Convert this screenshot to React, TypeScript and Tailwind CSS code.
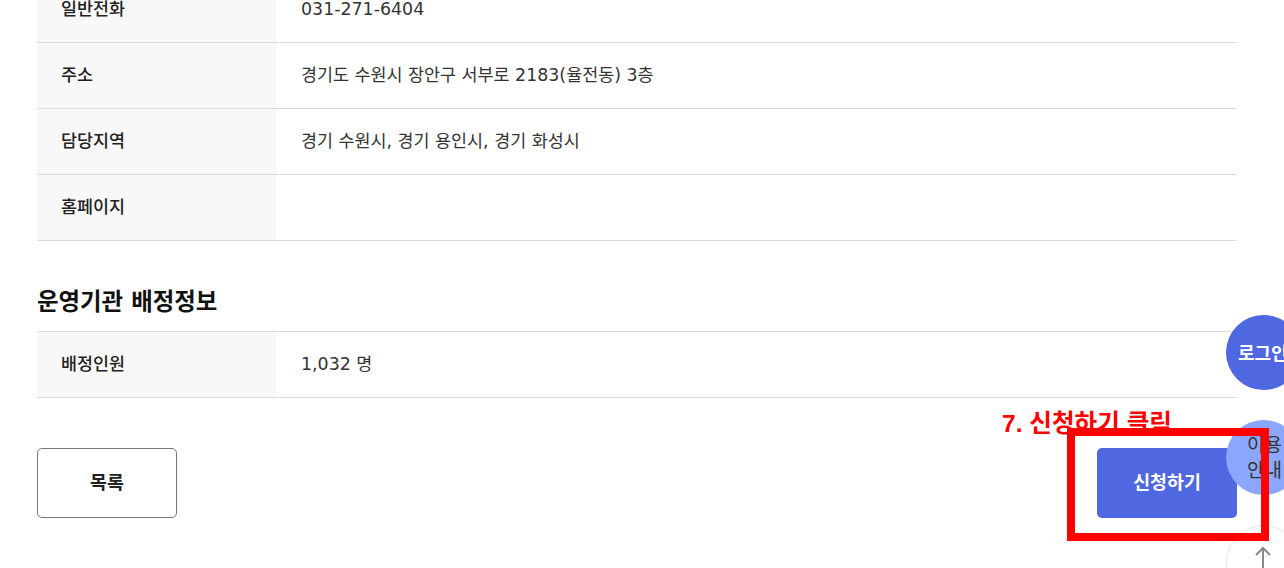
const rowLabel = "flex items-center w-[240px] h-[65px] pl-6 bg-[#f8f8f8] text-[17.4px] font-medium text-[#222]";
const rowValue = "flex items-center pl-[24px] text-[17.4px] text-[#333]";

const Row = ({ label, value }: { label: string; value?: string }) => (
  <div className="flex border-b border-[#dcdcdc]">
    <div className={rowLabel}>{label}</div>
    <div className={rowValue}>{value}</div>
  </div>
);

export default function App() {
  return (
    <div
      className="relative h-[568px] w-[1284px] overflow-hidden bg-white"
      style={{ fontFamily: '"DejaVu Sans", "Noto Sans CJK KR", sans-serif' }}
    >
      <div className="mx-[37px] -mt-[23px] w-[1200px]">
        <Row label="일반전화" value="031-271-6404" />
        <Row label="주소" value="경기도 수원시 장안구 서부로 2183(율전동) 3층" />
        <Row label="담당지역" value="경기 수원시, 경기 용인시, 경기 화성시" />
        <Row label="홈페이지" />

        <h3 className="mt-[43px] mb-[11px] h-[36px] text-[23.4px] leading-[36px] font-bold text-[#111]">
          운영기관 배정정보
        </h3>
        <div className="border-t border-[#dcdcdc]">
          <Row label="배정인원" value="1,032 명" />
        </div>

        <div className="mt-[50px] flex justify-between">
          <button
            type="button"
            className="w-[140px] h-[70px] rounded-[5px] border border-[#777] bg-white text-[18.4px] font-bold text-[#222]"
          >
            목록
          </button>
          <button
            type="button"
            className="w-[140px] h-[70px] rounded-[5px] bg-[#4f67e0] text-[18.4px] font-bold text-white"
          >
            신청하기
          </button>
        </div>
      </div>

      <div className="absolute left-[1226px] top-[315px] flex h-[75px] w-[75px] items-center pl-[12px] pt-[2px] rounded-full bg-[#4f67e0] text-[18px] font-bold text-white whitespace-nowrap">
        로그인
      </div>
      <div className="absolute left-[1226px] top-[420px] flex h-[75px] w-[75px] flex-col justify-center rounded-full bg-[#8ba7fb] pl-[21px] pt-[1px] text-[19px] leading-[25px] text-[#333]">
        <span>이용</span>
        <span>안내</span>
      </div>
      <div className="absolute left-[1226px] top-[525px] flex h-[75px] w-[75px] justify-center rounded-full border border-[#e5e5e5] bg-white pt-[20px] pr-[1px]">
        <svg width="20" height="24" viewBox="0 0 20 24" fill="none" stroke="#888" strokeWidth="2">
          <path d="M10 2V24M3 9L10 2L17 9" />
        </svg>
      </div>

      <div
        className="absolute left-[1002px] top-[406px] text-[24.6px] leading-[36px] font-bold text-[#ff0000] whitespace-nowrap"
        style={{ fontFamily: '"Liberation Sans", "Noto Sans CJK KR", sans-serif' }}
      >
        7. 신청하기 클릭
      </div>
      <div className="absolute left-[1067px] top-[428px] h-[113px] w-[202px] border-[8px] border-[#ff0000]" />
    </div>
  );
}
